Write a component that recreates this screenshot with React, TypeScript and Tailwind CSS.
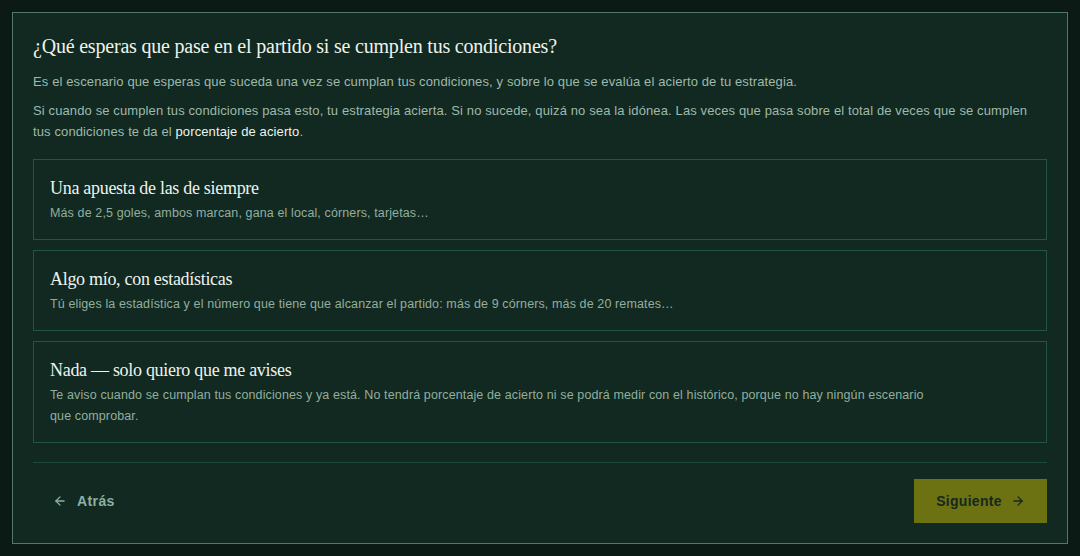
import { ArrowLeft, ArrowRight } from "lucide-react";

const serif = "font-['Liberation_Serif',serif]";
const sans = "font-['Liberation_Sans',sans-serif]";

const options = [
  {
    title: "Una apuesta de las de siempre",
    desc: "Más de 2,5 goles, ambos marcan, gana el local, córners, tarjetas…",
  },
  {
    title: "Algo mío, con estadísticas",
    desc: "Tú eliges la estadística y el número que tiene que alcanzar el partido: más de 9 córners, más de 20 remates…",
  },
  {
    title: "Nada — solo quiero que me avises",
    desc: "Te aviso cuando se cumplan tus condiciones y ya está. No tendrá porcentaje de acierto ni se podrá medir con el histórico, porque no hay ningún escenario que comprobar.",
  },
];

export default function App() {
  return (
    <div className={`min-h-[556px] w-full bg-[#0b1a15] p-3 ${sans}`}>
      <div className="flex flex-col border border-[#54776a] bg-[#112920] px-5 pb-5 pt-[19px]">
        <h1 className={`${serif} text-[20px] leading-7 tracking-[-0.2px] text-[#eef3ee]`}>
          ¿Qué esperas que pase en el partido si se cumplen tus condiciones?
        </h1>
        <p className="mt-[11px] text-[13px] leading-[21px] tracking-[0.12px] text-[#9fb9ac]">
          Es el escenario que esperas que suceda una vez se cumplan tus condiciones, y sobre lo que se evalúa el acierto de tu estrategia.
        </p>
        <p className="mt-2 text-[13px] leading-[21px] tracking-[0.12px] text-[#9fb9ac]">
          Si cuando se cumplen tus condiciones pasa esto, tu estrategia acierta. Si no sucede, quizá no sea la idónea. Las veces que pasa sobre el total de veces que se cumplen tus condiciones te da el <strong className="font-normal text-[#eef3ee]">porcentaje de acierto</strong>.
        </p>

        <div className="mt-[17px] flex flex-col gap-[10px]">
          {options.map((o) => (
            <button
              key={o.title}
              type="button"
              className="flex flex-col items-start border border-[#24563f] px-4 pb-[15px] pt-4 text-left"
            >
              <span className={`${serif} text-[18px] leading-6 tracking-[-0.3px] text-[#eef3ee]`}>{o.title}</span>
              <span className="mt-[3px] max-w-[882px] text-[12.5px] leading-[21px] tracking-[0.12px] text-[#93ae9f]">{o.desc}</span>
            </button>
          ))}
        </div>

        <div className="mt-[19px] flex items-center justify-between border-t border-[#1e4a38] pt-4">
          <button type="button" className="flex items-center gap-[10px] px-5 py-3 text-sm font-bold tracking-[0.4px] text-[#8db0a0]">
            <ArrowLeft size={14} strokeWidth={2.2} />
            Atrás
          </button>
          <button
            type="button"
            className="flex h-11 w-[133px] items-center justify-center gap-[9px] bg-[#6c7212] text-sm font-bold tracking-[0.3px] text-[#15281e]"
          >
            Siguiente
            <ArrowRight size={14} strokeWidth={2.2} />
          </button>
        </div>
      </div>
    </div>
  );
}
